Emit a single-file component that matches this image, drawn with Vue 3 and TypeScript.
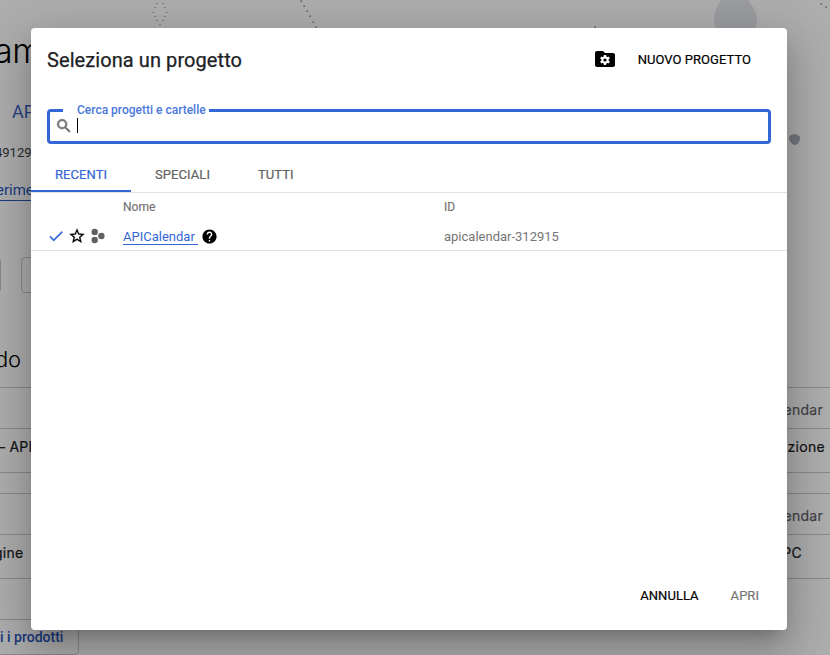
<script setup lang="ts">
import { ref } from 'vue'

interface Project { name: string; id: string }

const tabs: string[] = ['RECENTI', 'SPECIALI', 'TUTTI']
const activeTab = ref<string>('RECENTI')
const projects: Project[] = [{ name: 'APICalendar', id: 'apicalendar-312915' }]
const ringDots: number[][] = [[157, 3], [163, 3], [155, 7], [165, 7], [153, 12], [167, 12], [155, 16], [165, 16], [157, 20], [163, 20], [160, 24]]
const trailDots: number[][] = [[301, 1], [304, 6], [307, 11], [310, 16], [313, 22], [316, 27], [595, 27], [821, 4], [826, 7]]
</script>

<template>
  <div class="screen">
    <div class="page">
      <svg class="art" width="830" height="160" viewBox="0 0 830 160">
        <path d="M721 0h27c5 7 9 13 9 19 0 25-43 25-43 0 0-7 3-13 7-19z" fill="#e4e6ec" />
        <path d="M789 138c0-5 11-5 11 0 0 3-2 7-5 7s-6-4-6-7z" fill="#adb0ba" />
        <rect v-for="(d, i) in ringDots" :key="'r' + i" :x="d[0] - 0.5" :y="d[1]" width="1" height="1" fill="#777" />
        <rect v-for="(d, i) in trailDots" :key="'t' + i" :x="d[0] - 0.5" :y="d[1] - 0.5" width="1.4" height="1.4" fill="#777" />
      </svg>
      <div class="left">
        <h1>am</h1>
        <div class="crumb">API</div>
        <div class="num">49129</div>
        <div class="link"><span>erimen</span></div>
        <div class="btns"><i></i><i></i></div>
        <h2>do</h2>
        <div class="rows">
          <div class="head"></div>
          <div class="cell api">– API</div>
          <div class="gap"></div>
          <div class="head"></div>
          <div class="cell gine">gine</div>
        </div>
        <div class="all">i i prodotti</div>
      </div>
      <div class="right">
        <div class="rows">
          <div class="head endar">endar</div>
          <div class="cell zione">azione</div>
          <div class="gap"></div>
          <div class="head endar">endar</div>
          <div class="cell pc">PC</div>
        </div>
      </div>
    </div>
    <div class="backdrop">
      <section class="dialog">
        <header>
          <span class="title">Seleziona un progetto</span>
          <svg class="folder" width="24" height="24" viewBox="0 0 24 24">
            <path d="M10 4H4c-1.1 0-2 .9-2 2v12c0 1.1.9 2 2 2h16c1.1 0 2-.9 2-2V8c0-1.1-.9-2-2-2h-8z" />
            <g fill="#fff"><circle cx="12" cy="13" r="3.7" />
              <rect v-for="a in [0, 60, 120]" :key="a" x="10.8" y="8" width="2.4" height="10" rx=".4" :transform="`rotate(${a} 12 13)`" /></g>
            <circle cx="12" cy="13" r="1.6" />
          </svg>
          <span class="new">NUOVO PROGETTO</span>
        </header>
        <div class="search">
          <span class="label">Cerca progetti e cartelle</span>
          <svg width="18" height="18" viewBox="0 0 24 24"><path fill="#757575" d="M15.5 14h-.79l-.28-.27A6.47 6.47 0 0 0 16 9.5 6.5 6.5 0 1 0 9.5 16c1.61 0 3.09-.59 4.23-1.57l.27.28v.79l5 4.99L20.49 19l-4.99-5zm-6 0C7.01 14 5 11.99 5 9.5S7.01 5 9.5 5 14 7.01 14 9.5 11.99 14 9.5 14z" stroke="#757575" stroke-width=".9" /></svg>
          <span class="caret"></span>
        </div>
        <nav>
          <span v-for="t in tabs" :key="t" class="tab" :class="{ on: t === activeTab }" @click="activeTab = t">{{ t }}</span>
        </nav>
        <div class="table">
          <div class="tr th"><span></span><span>Nome</span><span>ID</span></div>
          <div v-for="p in projects" :key="p.id" class="tr td">
            <span class="icons">
              <svg width="18" height="18" viewBox="0 0 24 24"><path fill="#3367d6" stroke="#3367d6" stroke-width=".4" d="M9 16.17 4.83 12l-1.42 1.41L9 19 21 7l-1.41-1.41z" /></svg>
              <svg width="18" height="18" viewBox="0 0 24 24"><path stroke="#000" stroke-width=".3" d="m22 9.24-7.19-.62L12 2 9.19 8.63 2 9.24l5.46 4.73L5.82 21 12 17.27 18.18 21l-1.63-7.03L22 9.24zM12 15.4l-3.76 2.27 1-4.28-3.32-2.88 4.38-.38L12 6.1l1.71 4.04 4.38.38-3.32 2.88 1 4.28L12 15.4z" /></svg>
              <svg class="hex" width="14" height="16" viewBox="0 0 14 16" fill="#616161"><circle cx="3.7" cy="3.9" r="3.2" /><circle cx="3.7" cy="12" r="3.2" /><circle cx="10.4" cy="8" r="3.2" /></svg>
            </span>
            <span class="name"><a>{{ p.name }}</a>
              <svg width="17" height="17" viewBox="0 0 24 24"><path d="M12 2C6.48 2 2 6.48 2 12s4.48 10 10 10 10-4.48 10-10S17.52 2 12 2zm1 17h-2v-2h2v2zm2.07-7.75-.9.92C13.45 12.9 13 13.5 13 15h-2v-.5c0-1.1.45-2.1 1.17-2.83l1.24-1.26c.37-.36.59-.86.59-1.41 0-1.1-.9-2-2-2s-2 .9-2 2H8c0-2.21 1.79-4 4-4s4 1.79 4 4c0 .88-.36 1.68-.93 2.25z" /></svg>
            </span>
            <span class="pid">{{ p.id }}</span>
          </div>
        </div>
        <footer><span>ANNULLA</span><span class="off">APRI</span></footer>
      </section>
    </div>
  </div>
</template>

<style>
html, body { margin: 0; overflow: hidden; }
</style>

<style scoped>
* { box-sizing: border-box; }
.screen { position: relative; width: 830px; height: 655px; overflow: hidden; font-family: Roboto, sans-serif; color: #202124; }
.page { display: flex; justify-content: space-between; width: 100%; height: 655px; background: #fff; overflow: hidden; }
.art { position: absolute; left: 0; top: 0; }
.left { width: 80px; display: flex; flex-direction: column; white-space: nowrap; }
h1 { margin: 30px 0 0 -6px; height: 42px; font: 300 34px/42px Inter, sans-serif; color: #000; letter-spacing: -.5px; }
.crumb { margin: 30px 0 0 12px; height: 20px; font-size: 18px; line-height: 20px; color: #3c5fc4; }
.num { margin: 22px 0 0 -5px; height: 18px; font-size: 13px; line-height: 18px; color: #3c4043; }
.link { margin: 19px 0 0 -4px; height: 20px; font-size: 15px; line-height: 18px; color: #2857bd; }
.link span { display: inline-block; height: 20px; border-bottom: 1px solid #2857bd; }
.btns { display: flex; gap: 20px; margin: 56px 0 0 -59px; height: 36px; }
.btns i { flex: 0 0 60px; height: 36px; border: 1px solid #c9cbce; border-radius: 4px; }
h2 { margin: 51px 0 0 -5px; height: 30px; font: 300 22px/30px Inter, sans-serif; color: #000; letter-spacing: -.2px; }
.rows { border-top: 1px solid #c9cbce; font: 400 14px/20px Inter, sans-serif; }
.left .rows { margin-top: 13px; }
.head { height: 41px; border-bottom: 1px solid #c9cbce; line-height: 44px; }
.cell { height: 44px; border-bottom: 1px solid #c9cbce; line-height: 36px; letter-spacing: .25px; -webkit-text-stroke: .2px currentColor; }
.gap { height: 21px; border-bottom: 1px solid #c9cbce; }
.left .api { text-indent: -2px; }
.gine { text-indent: -6px; }
.all { margin: 40px 0 0 -8px; height: 36px; width: 87px; border: 1px solid #c9cbce; border-radius: 4px; padding-left: 7px; font-size: 14px; line-height: 35px; font-weight: 500; color: #2857bd; }
.right { width: 80px; padding-top: 387px; text-align: right; }
.endar { padding-right: 7px; color: #5f6368; letter-spacing: .25px; -webkit-text-stroke: .2px currentColor; }
.zione { padding-right: 5px; letter-spacing: .3px; }
.pc { padding-right: 28px; }
.backdrop { position: absolute; inset: 0; padding: 28px 43px 25px 31px; background: rgba(0, 0, 0, .32); }
.dialog { height: 602px; display: flex; flex-direction: column; background: #fff; border-radius: 4px; box-shadow: 0 11px 15px -7px rgba(0,0,0,.2), 0 24px 38px 3px rgba(0,0,0,.14), 0 9px 46px 8px rgba(0,0,0,.12); }
header { height: 64px; display: flex; align-items: center; padding: 0 36px 0 16px; }
.title { flex: 1; font-size: 20px; letter-spacing: .08px; -webkit-text-stroke: .25px currentColor; }
.folder { margin: 0 21px 2px 0; }
.new { font-size: 13px; color: #000; letter-spacing: .04px; padding-bottom: 2px; -webkit-text-stroke: .2px currentColor; }
.search { position: relative; margin: 17px 16px 0; height: 35px; border: 3px solid #3367d6; border-radius: 4px; display: flex; align-items: center; padding: 0 0 2px 5px; }
.label { position: absolute; left: 13px; top: -9px; height: 14px; padding: 0 3px 0 14px; background: #fff; color: #4a78db; font-size: 12px; line-height: 14px; font-weight: 500; }
.caret { width: 1px; height: 15px; margin-left: 4px; background: #000; }
nav { display: flex; height: 49px; border-bottom: 1px solid #e0e0e0; }
.tab { height: 48px; padding: 0 24px; line-height: 62px; font-size: 13px; letter-spacing: .06px; color: #616161; -webkit-text-stroke: .2px currentColor; }
.tab.on { color: #3367d6; border-bottom: 2px solid #3367d6; }
.tr { display: grid; grid-template-columns: 92px 321px 1fr; font-size: 13px; }
.th { height: 29px; line-height: 28px; font-size: 12px; color: #757575; -webkit-text-stroke: .2px currentColor; }
.td { height: 29px; align-items: center; border-bottom: 1px solid #e0e0e0; color: #757575; }
.icons { display: flex; align-items: center; padding-left: 16px; gap: 3px; }
.hex { margin-left: 2px; }
.name { display: flex; align-items: center; gap: 4px; }
.name a { color: #3367d6; border-bottom: 1px solid #3367d6; height: 16px; line-height: 15px; padding-right: 3px; margin-bottom: -1px; }
.name svg { margin: 0 0 0 -.5px; }
footer { margin-top: auto; height: 70px; padding: 0 28px 0; display: flex; justify-content: flex-end; gap: 32px; line-height: 71px; font-size: 13px; letter-spacing: .04px; color: #000; -webkit-text-stroke: .2px currentColor; }
.off { color: #757575; }
</style>
